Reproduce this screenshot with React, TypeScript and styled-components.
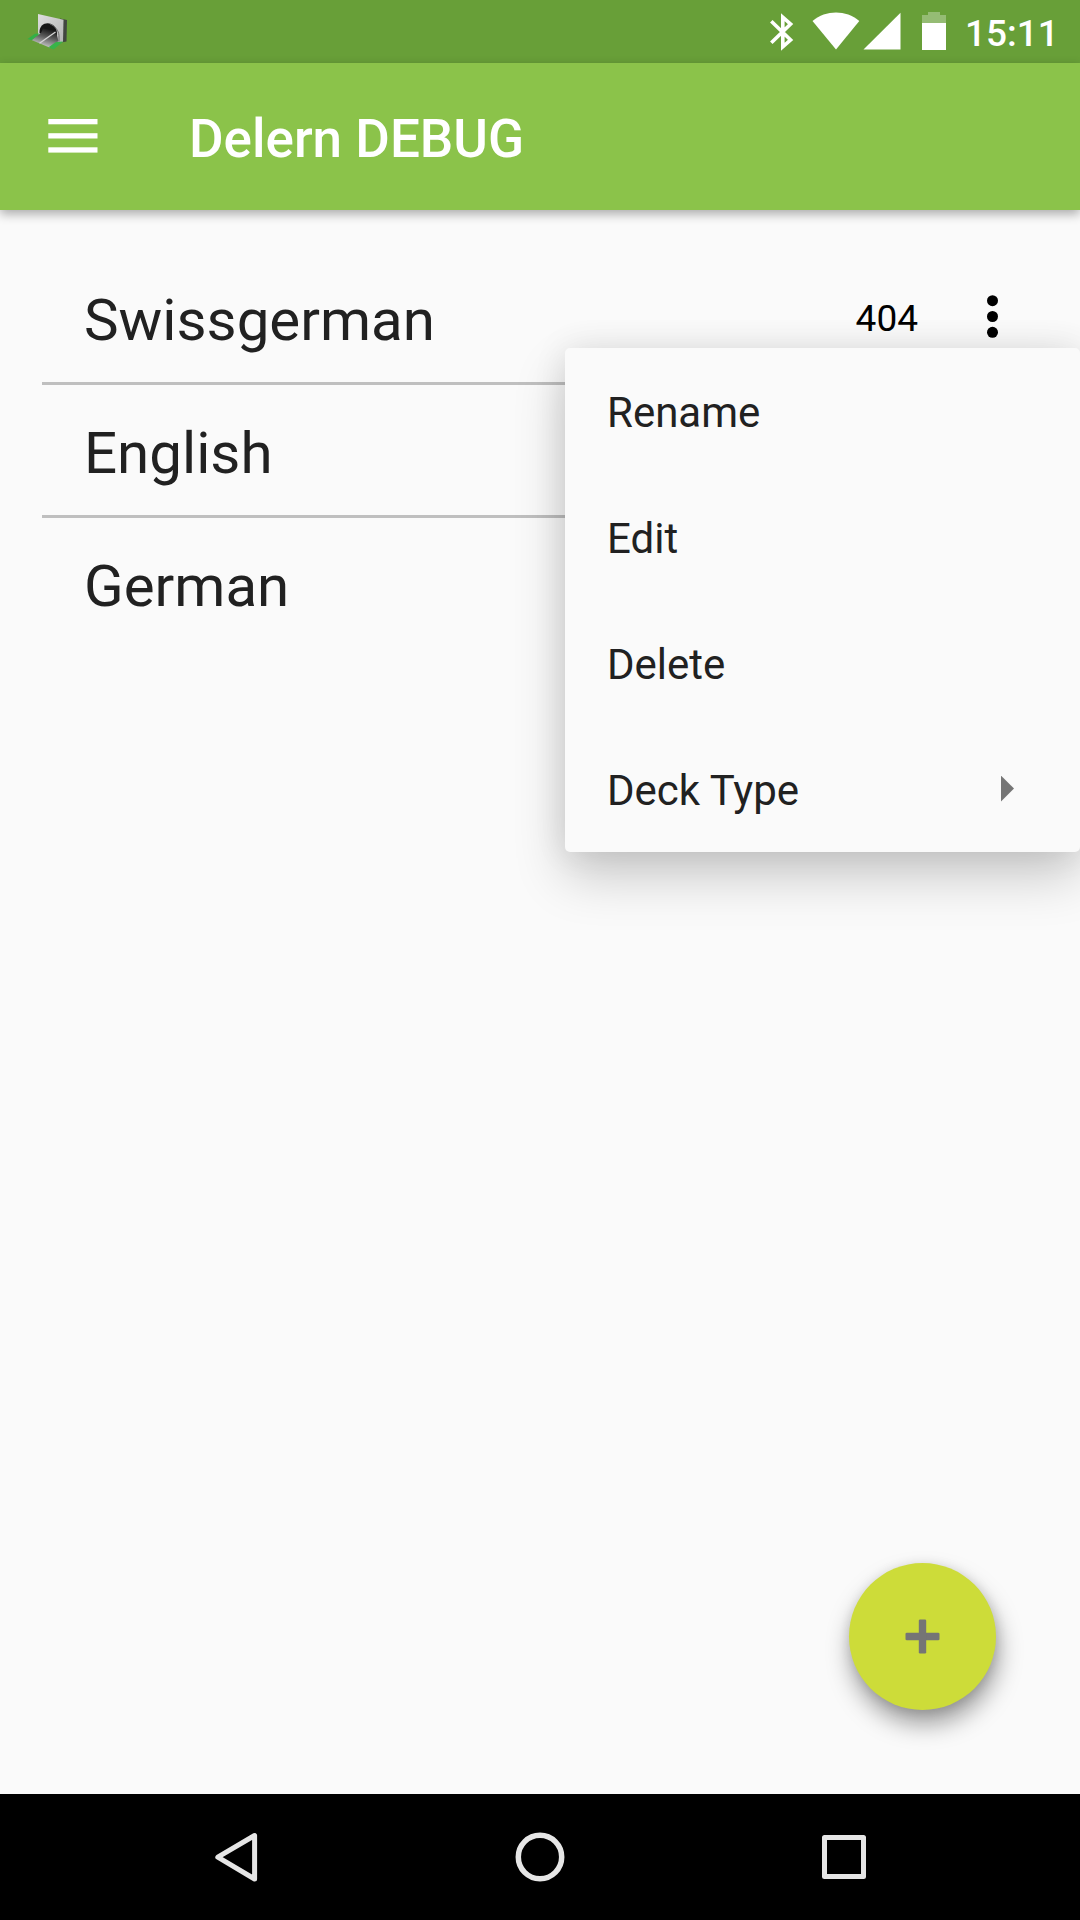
import React from "react";
import styled, { createGlobalStyle } from "styled-components";

const GlobalStyle = createGlobalStyle`
  *, *::before, *::after { box-sizing: border-box; }
  body { margin: 0; background: #fafafa; }
  button { border: 0; padding: 0; background: none; font: inherit; color: inherit; }
  svg { display: block; flex: none; }
`;

const Screen = styled.div`
  position: relative;
  display: flex;
  flex-direction: column;
  width: 1080px;
  height: 1920px;
  overflow: hidden;
  background: #fafafa;
  color: #212121;
  font-family: Roboto, "Noto Sans", sans-serif;
`;

const StatusBar = styled.header`
  display: flex;
  align-items: center;
  justify-content: space-between;
  height: 63px;
  flex: none;
  padding: 0 23px 0 27px;
  background: #689f38;
  color: #fff;
`;

const StatusIcons = styled.div`
  display: flex;
  align-items: center;
`;

const Clock = styled.time`
  width: 92px;
  margin-left: 18px;
  padding-top: 4px;
  font-size: 37px;
  font-weight: 500;
  line-height: 60px;
  white-space: nowrap;
`;

const Toolbar = styled.div`
  position: relative;
  display: flex;
  align-items: center;
  height: 147px;
  flex: none;
  padding-left: 48px;
  background: #8bc34a;
  color: #fff;
  box-shadow: 0 4px 10px rgba(0, 0, 0, 0.32);
`;

const MenuButton = styled.button`
  width: 50px;
  margin-right: 91px;
`;

const Title = styled.h1`
  margin: 0;
  padding-top: 5px;
  font-size: 53px;
  font-weight: 500;
  line-height: 62px;
`;

const DeckList = styled.ul`
  flex: 1;
  margin: 0;
  padding: 42px 42px 0;
  list-style: none;
`;

const DeckRow = styled.li`
  position: relative;
  display: flex;
  align-items: center;
  height: 133px;
  padding: 0 40px 0 42px;
  border-bottom: 3px solid #bfbfbf;

  &:last-child { border-bottom-color: transparent; }
`;

const DeckName = styled.span`
  flex: 1;
  padding-top: 6px;
  font-size: 58.25px;
  line-height: 68px;
`;

const CardCount = styled.span`
  padding-top: 3px;
  margin-right: 68px;
  color: #000;
  font-size: 37px;
  line-height: 44px;
`;

const PopupMenu = styled.div`
  position: absolute;
  top: 96px;
  right: -42px;
  z-index: 2;
  width: 515px;
  border-radius: 5px;
  background: #fafafa;
  box-shadow: 0 24px 52px rgba(0, 0, 0, 0.2), 0 0 34px rgba(0, 0, 0, 0.09);
`;

const PopupItem = styled.div`
  display: flex;
  align-items: center;
  justify-content: space-between;
  height: 126px;
  padding: 0 66px 0 42px;
`;

const PopupLabel = styled.span`
  padding-top: 3px;
  font-size: 42px;
  line-height: 50px;
`;

const AddButton = styled.button`
  position: absolute;
  right: 84px;
  bottom: 210px;
  display: flex;
  align-items: center;
  justify-content: center;
  width: 147px;
  height: 147px;
  border-radius: 50%;
  background: #cddc39;
  box-shadow: 2px 14px 24px rgba(0, 0, 0, 0.38), 1px 2px 12px rgba(0, 0, 0, 0.12);
`;

const NavigationBar = styled.nav`
  display: flex;
  align-items: center;
  justify-content: space-between;
  height: 126px;
  flex: none;
  padding: 0 211px;
  background: #000;
`;

const TunnelIcon = () => (
  <svg width="42" height="40" viewBox="27 11.500 42 40">
    <defs>
      <linearGradient id="portal" x1="0" y1="0" x2="1" y2="1">
        <stop offset="0" stopColor="#dedede" />
        <stop offset="1" stopColor="#b4b4b4" />
      </linearGradient>
      <linearGradient id="road" x1="0.75" y1="0" x2="0.35" y2="1">
        <stop offset="0" stopColor="#0c0c0c" />
        <stop offset="0.45" stopColor="#5c5c5c" />
        <stop offset="0.85" stopColor="#b8b8b8" />
      </linearGradient>
    </defs>
    <path d="M60 18 L67 19.500 L66.500 41 L61 42 Z" fill="#424640" />
    <path d="M38 13.500 L63.500 19.300 L63 41.500 L57 42 L38 34 Z" fill="url(#portal)" />
    <path d="M39.500 32 C39 19.500 56.500 19.500 57 33 L56.500 40 L45 38 Z" fill="#161616" />
    <path d="M43 28 L55.500 30 L58.500 40.500 L50 47.300 L31.500 39.500 L41 32.500 Z" fill="url(#road)" />
    <path d="M27.500 38.600 L35 33.200 L39.800 33 L31.700 39.700 Z" fill="#32b046" />
    <path d="M48.500 46.800 L56 41.500 L63.300 41 L53.500 49 Z" fill="#38b448" />
    <path d="M39.500 42.800 L55.500 31.500" stroke="#d6d6d6" strokeWidth="1.300" />
    <path d="M50 23.500 C55 25.500 58.700 30 59 35 V41" stroke="#6a6a6a" strokeWidth="1" fill="none" />
  </svg>
);

const SystemIcons = () => (
  <svg width="178" height="42" viewBox="769 11 178 42" fill="#fff">
    <path
      d="M771.300 21.300 L790.600 39.900 L782.800 46.800 V17.200 L790.600 24.100 L771.300 42.700"
      fill="none"
      stroke="#fff"
      strokeWidth="3.600"
    />
    <path d="M812.500 21 C826 9.800 846 9.800 859.300 21 L836 49.500 Z" />
    <path d="M863.500 49.500 L900.500 12.800 V49.500 Z" />
    <path d="M922 23 V15 H928 V12 H940 V15 H946 V23 Z" opacity="0.3" />
    <path d="M922 23 H946 V50 H922 Z" />
  </svg>
);

const HamburgerIcon = () => (
  <svg width="50" height="35" viewBox="0 0 50 35" fill="#fff">
    <rect x="0.300" y="0" width="49.200" height="5.300" />
    <rect x="0.300" y="14.200" width="49.200" height="5.300" />
    <rect x="0.300" y="28.300" width="49.200" height="5.300" />
  </svg>
);

const MoreIcon = () => (
  <svg width="12" height="44" viewBox="0 0 12 44" fill="#000">
    <circle cx="6.500" cy="5.700" r="5.500" />
    <circle cx="6.500" cy="21.500" r="5.500" />
    <circle cx="6.500" cy="37.300" r="5.500" />
  </svg>
);

const SubmenuArrow = () => (
  <svg width="13" height="26" viewBox="0 0 13 26">
    <path d="M0 -0.400 L13 12.600 L0 25.600 Z" fill="#757575" />
  </svg>
);

const PlusIcon = () => (
  <svg width="35" height="35" viewBox="0 0 35 35" fill="#757575">
    <rect x="0.500" y="13.800" width="34" height="7.400" rx="1.300" />
    <rect x="13.800" y="0.500" width="7.400" height="34" rx="1.300" />
  </svg>
);

const navStroke = {
  fill: "none",
  stroke: "#e6e6e6",
  strokeLinejoin: "round" as const,
};

const BackIcon = () => (
  <svg width="50" height="50" viewBox="0 0 50 50">
    <path d="M43.600 3.500 V47 L6.800 25.200 Z" strokeWidth="5" {...navStroke} />
  </svg>
);

const HomeIcon = () => (
  <svg width="50" height="50" viewBox="0 0 50 50">
    <circle cx="25" cy="25" r="21.700" strokeWidth="5.500" {...navStroke} />
  </svg>
);

const RecentsIcon = () => (
  <svg width="50" height="50" viewBox="0 0 50 50">
    <rect x="5.500" y="5.500" width="39" height="39" strokeWidth="5" {...navStroke} />
  </svg>
);

const decks = [
  { name: "Swissgerman", count: 404 },
  { name: "English" },
  { name: "German" },
];

const actions = [
  { label: "Rename" },
  { label: "Edit" },
  { label: "Delete" },
  { label: "Deck Type", submenu: true },
];

export default function App() {
  return (
    <Screen>
      <GlobalStyle />
      <StatusBar>
        <TunnelIcon />
        <StatusIcons>
          <SystemIcons />
          <Clock>15:11</Clock>
        </StatusIcons>
      </StatusBar>
      <Toolbar>
        <MenuButton aria-label="Open navigation">
          <HamburgerIcon />
        </MenuButton>
        <Title>Delern DEBUG</Title>
      </Toolbar>
      <DeckList>
        {decks.map((deck) => (
          <DeckRow key={deck.name}>
            <DeckName>{deck.name}</DeckName>
            {deck.count !== undefined && (
              <>
                <CardCount>{deck.count}</CardCount>
                <MoreIcon />
                <PopupMenu>
                  {actions.map((action) => (
                    <PopupItem key={action.label}>
                      <PopupLabel>{action.label}</PopupLabel>
                      {action.submenu && <SubmenuArrow />}
                    </PopupItem>
                  ))}
                </PopupMenu>
              </>
            )}
          </DeckRow>
        ))}
      </DeckList>
      <AddButton aria-label="Add deck">
        <PlusIcon />
      </AddButton>
      <NavigationBar>
        <BackIcon />
        <HomeIcon />
        <RecentsIcon />
      </NavigationBar>
    </Screen>
  );
}
